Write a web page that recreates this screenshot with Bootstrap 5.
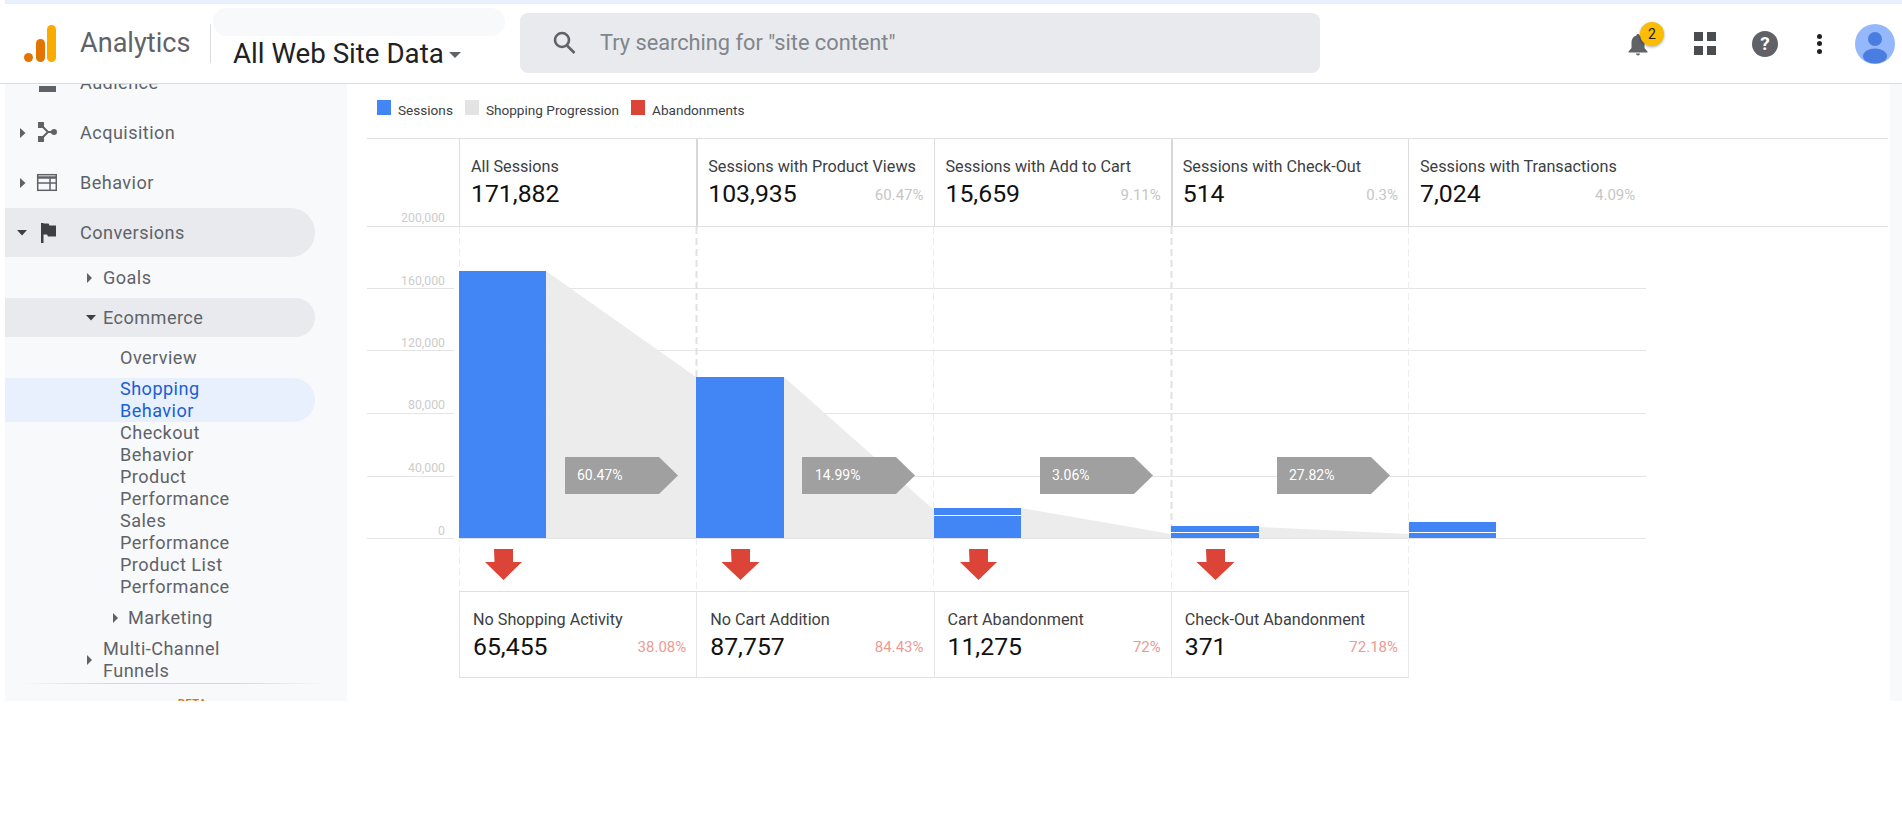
<!DOCTYPE html>
<html lang="en">
<head>
<meta charset="utf-8">
<title>Shopping Behavior - Analytics</title>
<link href="https://cdn.jsdelivr.net/npm/bootstrap@5.3.0/dist/css/bootstrap.min.css" rel="stylesheet">
<style>
html,body{height:100%;overflow:hidden;background:#fff;font-family:Roboto,"Liberation Sans",sans-serif;color:#212121}
.ga-strip{height:4px;margin-left:5px;background:#e8f0fe}
.ga-top{height:80px;border-bottom:1px solid #dcdcdc;background:#fff}
.ga-logo{margin-left:24px;flex:none}
.ga-brand{margin-left:24px;width:110px;font-size:27.1px;color:#5f6368;line-height:1;white-space:nowrap}
.ga-vline{margin-left:20px;width:1px;height:39px;background:#dadce0}
.ga-prop{margin-left:2px;width:292px;padding-top:4px}
.ga-pill{height:28px;border-radius:14px;background:#f8f9fa}
.ga-title{margin-top:3px;padding-left:20px;font-size:27.7px;line-height:30px;color:#202124;white-space:nowrap}
.ga-caret{display:inline-block;margin-left:5px;vertical-align:5px;border:6.5px solid transparent;border-top-color:#5f6368;border-bottom:0}
.ga-search{margin-left:15px;margin-bottom:1px;width:800px;height:60px;border-radius:8px;background:#e8eaed;padding-left:31px;color:#80868b;font-size:21.75px}
.ga-search span{margin-left:23px}
.ga-tools{padding-right:7px}
.ga-bell{width:20px;height:22px}
.ga-badge{position:absolute;top:-11px;left:12px;width:24px;height:24px;border-radius:50%;background:#fbbc04;box-shadow:0 1px 3px rgba(0,0,0,.35);font-size:14px;line-height:24px;text-align:center;color:#202124}
.ga-apps{margin-left:46px;display:grid;grid-template-columns:9px 9px;gap:5px 4px}
.ga-apps i{display:block;width:9px;height:9px;background:#4a4d50}
.ga-help{margin-left:36px;width:26px;height:26px;border-radius:50%;background:#5f6368;color:#fff;font-weight:700;font-size:19px;line-height:26px;text-align:center}
.ga-dots{margin-left:39px;width:6px;gap:2.5px}
.ga-dots i{display:block;width:5px;height:5px;border-radius:50%;background:#202124}
.ga-avatar{margin-left:32px;flex:none}
.ga-body{height:617px}
.ga-side{margin-left:5px;width:342px;flex:none;background:#f8f9fb;overflow:hidden;color:#5f6368;font-size:18.1px;letter-spacing:.45px;line-height:22px}
.ga-list{margin-top:-26px}
.ga-row{display:flex;align-items:center;height:50px;width:310px;position:relative}
.ga-row.ga-open{background:#e8eaed;border-radius:0 25px 25px 0;height:49px;margin-bottom:1px}
.ga-row svg.ga-ic{position:absolute;left:26px}
.ga-tick{position:absolute;left:0}
.ga-tick-s{left:55px}
.ga-tick-e{left:56px}
.ga-tick-m{left:81px}
.ga-lab{margin-left:75px}
.ga-sub{display:flex;align-items:center;width:310px;position:relative;height:40px}
.ga-sub .ga-lab{margin-left:98px}
.ga-sub.ga-open2{height:39px;margin-bottom:1px;background:#e8eaed;border-radius:0 20px 20px 0}
.ga-leaf{display:block;width:310px;padding-left:115px}
.ga-leaf.ga-h40{height:40px;line-height:40px}
.ga-leaf.ga-cur{background:#e8f0fe;color:#1a5fd6;border-radius:0 22px 22px 0}
.ga-sub.ga-mk .ga-lab{margin-left:123px}
.ga-sub.ga-mc{height:44px}
.ga-rule{height:1px;margin:1px 20px 0 15px;background:linear-gradient(90deg,#f8f9fb,#d5d6d8 30%,#d5d6d8 70%,#f8f9fb)}
.ga-beta{margin:14px 0 0 173px;font-size:11px;font-weight:700;color:#e8710a;letter-spacing:.5px;line-height:12px}
.ga-main{padding-left:20px;min-width:0}
.ga-panel{width:12px;flex:none;background:#f8f9fb}
.ga-legend{height:54px;padding-left:10px;font-size:13.6px;color:#3c4043;padding-top:16px}
.ga-legend b{display:inline-block;width:14px;height:15px;margin-right:7px;font-weight:400}
.ga-legend .ga-item{margin-right:12px;white-space:nowrap}
.ga-sw1{background:#4285f4}.ga-sw2{background:#e3e3e3}.ga-sw3{background:#db4437}
.ga-hd{border-top:1px solid #e0e0e0;border-bottom:1px solid #e0e0e0;width:1521px;height:89px;display:flex}
.ga-cols{display:grid;grid-template-columns:repeat(5,237.25px)}
.ga-ax{width:92px;flex:none;font-size:12.3px;color:#ccc;text-align:right;padding-right:14px;padding-top:71px;line-height:16px}
.ga-cell{border-left:1px solid #ddd;padding:18px 10px 0 11px;height:87px}
.ga-cell.ga-bold{border-left-width:2px;border-left-color:#d8d8d8;padding-left:10px}
.ga-name{font-size:16.2px;line-height:20px;color:#3c4043;white-space:nowrap}
.ga-val{font-size:24.8px;line-height:33px;color:#111}
.ga-pct{font-size:15px;color:#c6c6c6;padding-top:7px}
.ga-plot{display:block;width:1281px;height:364px;margin-left:-1px}
.ga-plot text{font-family:Roboto,"Liberation Sans",sans-serif}
.ga-low{margin-left:92px;width:950px;display:grid;grid-template-columns:repeat(4,237.25px);border-top:1px solid #e0e0e0;border-bottom:1px solid #e0e0e0;border-right:1px solid #e8e8e8;height:87px}
.ga-low .ga-cell{padding:18px 10px 0 13px;height:85px;border-left-color:#e4e4e4}
.ga-low .ga-pct{color:#ee9a93;padding-top:6px}
</style>
</head>
<body>
<div class="ga-strip"></div>
<header class="ga-top d-flex align-items-center">
  <svg class="ga-logo" width="32" height="38" viewBox="24 24 32 38"><circle cx="28.5" cy="56.5" r="4.5" fill="#e37400"/><rect x="36" y="38" width="9" height="23" rx="4.5" fill="#e37400"/><rect x="47" y="24" width="9" height="37" rx="4.5" fill="#f9ab00"/></svg>
  <div class="ga-brand">Analytics</div>
  <div class="ga-vline"></div>
  <div class="ga-prop align-self-start">
    <div class="ga-pill"></div>
    <div class="ga-title">All Web Site Data<span class="ga-caret"></span></div>
  </div>
  <div class="ga-search d-flex align-items-center">
    <svg width="26" height="26" viewBox="0 0 26 26" fill="none" stroke="#5f6368" stroke-width="2.6"><circle cx="11" cy="10" r="7"/><path d="M16 15.5l7.5 7.5"/></svg>
    <span>Try searching for "site content"</span>
  </div>
  <div class="ga-tools ms-auto d-flex align-items-center">
    <div class="ga-bell position-relative">
      <svg width="20" height="22" viewBox="0 0 20 22"><path d="M10 0c1 0 1.6.7 1.6 1.6C15 2.500 16.500 5.500 16.500 9v5l3 3.500v1H.5v-1l3-3.500V9c0-3.500 1.500-6.500 4.900-7.400C8.400.7 9 0 10 0z" fill="#5f6368"/><path d="M8 19.500h4a2 2 0 0 1-4 0z" fill="#5f6368"/></svg>
      <span class="ga-badge">2</span>
    </div>
    <div class="ga-apps"><i></i><i></i><i></i><i></i></div>
    <div class="ga-help">?</div>
    <div class="ga-dots d-flex flex-column"><i></i><i></i><i></i></div>
    <svg class="ga-avatar" width="40" height="40" viewBox="0 0 40 40"><defs><clipPath id="av"><circle cx="20" cy="20" r="20"/></clipPath></defs><circle cx="20" cy="20" r="20" fill="#94b8fb"/><g clip-path="url(#av)"><circle cx="20" cy="15" r="7" fill="#4a7de0"/><ellipse cx="20" cy="32" rx="12" ry="7.500" fill="#4a7de0"/></g></svg>
  </div>
</header>
<div class="ga-body d-flex">
  <aside class="ga-side">
    <div class="ga-list">
      <div class="ga-row">
        <svg class="ga-ic" width="26" height="50" viewBox="0 0 26 50"><rect x="8" y="28" width="17" height="6" fill="#5f6368"/></svg>
        <span class="ga-lab">Audience</span>
      </div>
      <div class="ga-row">
        <svg class="ga-tick" width="32" height="14" viewBox="0 0 32 14"><path d="M15 2l5.500 5-5.500 5z" fill="#5f6368"/></svg>
        <svg class="ga-ic" width="26" height="22" viewBox="31 122 26 22" fill="#5f6368"><path d="M41 125l7 7-7 7M48 132h6" fill="none" stroke="#5f6368" stroke-width="2"/><rect x="38" y="122" width="6" height="6"/><rect x="38" y="136" width="6" height="6"/><circle cx="54" cy="132" r="3"/></svg>
        <span class="ga-lab">Acquisition</span>
      </div>
      <div class="ga-row">
        <svg class="ga-tick" width="32" height="14" viewBox="0 0 32 14"><path d="M15 2l5.500 5-5.500 5z" fill="#5f6368"/></svg>
        <svg class="ga-ic" width="26" height="20" viewBox="31 173 26 20" fill="none" stroke="#5f6368" stroke-width="1.500"><rect x="37.700" y="174.700" width="18.600" height="15.600"/><path d="M37 177.500h20" stroke-width="2.500"/><path d="M37 183h20M50 178v12"/></svg>
        <span class="ga-lab">Behavior</span>
      </div>
      <div class="ga-row ga-open">
        <svg class="ga-tick" width="32" height="14" viewBox="0 0 32 14"><path d="M12 4h10l-5 5.500z" fill="#3c4043"/></svg>
        <svg class="ga-ic" width="26" height="22" viewBox="31 222 26 22" fill="#3c4043"><rect x="41" y="223" width="2.500" height="20"/><path d="M43 223.500h5.500l1 2h6.500v11h-8l-1-2H43z"/></svg>
        <span class="ga-lab">Conversions</span>
      </div>
      <div class="ga-sub">
        <svg class="ga-tick ga-tick-s" width="32" height="14" viewBox="0 0 32 14"><path d="M27 2l5 5-5 5z" fill="#5f6368"/></svg>
        <span class="ga-lab">Goals</span>
      </div>
      <div class="ga-sub ga-open2">
        <svg class="ga-tick ga-tick-e" width="36" height="14" viewBox="0 0 36 14"><path d="M25 4h10l-5 5.500z" fill="#3c4043"/></svg>
        <span class="ga-lab">Ecommerce</span>
      </div>
      <span class="ga-leaf ga-h40">Overview</span>
      <span class="ga-leaf ga-cur">Shopping<br>Behavior</span>
      <span class="ga-leaf">Checkout<br>Behavior</span>
      <span class="ga-leaf">Product<br>Performance</span>
      <span class="ga-leaf">Sales<br>Performance</span>
      <span class="ga-leaf">Product List<br>Performance</span>
      <div class="ga-sub ga-mk">
        <svg class="ga-tick ga-tick-m" width="32" height="14" viewBox="0 0 32 14"><path d="M27 2l5 5-5 5z" fill="#5f6368"/></svg>
        <span class="ga-lab">Marketing</span>
      </div>
      <div class="ga-sub ga-mc">
        <svg class="ga-tick ga-tick-s" width="32" height="14" viewBox="0 0 32 14"><path d="M27 2l5 5-5 5z" fill="#5f6368"/></svg>
        <span class="ga-lab">Multi-Channel<br>Funnels</span>
      </div>
      <div class="ga-rule"></div>
      <div class="ga-beta">BETA</div>
    </div>
  </aside>
  <main class="ga-main flex-grow-1">
    <div class="ga-legend d-flex">
      <span class="ga-item"><b class="ga-sw1"></b>Sessions</span>
      <span class="ga-item"><b class="ga-sw2"></b>Shopping Progression</span>
      <span class="ga-item"><b class="ga-sw3"></b>Abandonments</span>
    </div>
    <div class="ga-hd">
      <div class="ga-ax">200,000</div>
      <div class="ga-cols">
        <div class="ga-cell"><div class="ga-name">All Sessions</div><div class="d-flex justify-content-between"><span class="ga-val">171,882</span></div></div>
        <div class="ga-cell ga-bold"><div class="ga-name">Sessions with Product Views</div><div class="d-flex justify-content-between"><span class="ga-val">103,935</span><span class="ga-pct">60.47%</span></div></div>
        <div class="ga-cell"><div class="ga-name">Sessions with Add to Cart</div><div class="d-flex justify-content-between"><span class="ga-val">15,659</span><span class="ga-pct">9.11%</span></div></div>
        <div class="ga-cell ga-bold"><div class="ga-name">Sessions with Check-Out</div><div class="d-flex justify-content-between"><span class="ga-val">514</span><span class="ga-pct">0.3%</span></div></div>
        <div class="ga-cell"><div class="ga-name">Sessions with Transactions</div><div class="d-flex justify-content-between"><span class="ga-val">7,024</span><span class="ga-pct">4.09%</span></div></div>
      </div>
    </div>
    <svg class="ga-plot" viewBox="366 227 1281 364" font-size="12.300">
      <g stroke="#e4e4e4"><path d="M367 288.500H454M459 288.500H1646M367 350.500H454M459 350.500H1646M367 413.500H454M459 413.500H1646M367 476.500H454M459 476.500H1646M367 538.500H454M459 538.500H1646"/></g>
      <g fill="#ccc" text-anchor="end"><text x="445" y="284.500">160,000</text><text x="445" y="346.500">120,000</text><text x="445" y="408.500">80,000</text><text x="445" y="471.500">40,000</text><text x="445" y="534.500">0</text></g>
      <g stroke="#ededed" stroke-dasharray="7 4"><path d="M459.500 227V591M933.500 227V591M1408.500 227V591"/></g>
      <g stroke="#e2e2e2" stroke-width="2" stroke-dasharray="7 4"><path d="M696.500 227V538M1171.500 227V538"/></g>
      <g stroke="#ededed" stroke-dasharray="7 4"><path d="M696.500 538V591M1171.500 538V591"/></g>
      <g fill="#ebebeb" fill-opacity=".94"><path d="M546 271L696 377V538H546z"/><path d="M784 377L934 510V538H784z"/><path d="M1021 508L1171 534V538H1021z"/><path d="M1259 527L1409 534V538H1259z"/></g>
      <g fill="#4285f4"><rect x="459" y="271" width="87" height="267"/><rect x="696" y="377" width="88" height="161"/><rect x="934" y="508" width="87" height="30"/><rect x="1171" y="526" width="88" height="12"/><rect x="1409" y="522" width="87" height="16"/></g>
      <g fill="#fff"><rect x="934" y="515" width="87" height="1"/><rect x="1171" y="532" width="88" height="1"/><rect x="1409" y="532" width="87" height="1"/></g>
      <g fill="#a0a0a0"><path d="M565 457h94l19 18.500-19 18.500h-94z"/><path d="M802 457h94l19 18.500-19 18.500h-94z"/><path d="M1040 457h94l19 18.500-19 18.500h-94z"/><path d="M1277 457h94l19 18.500-19 18.500h-94z"/></g>
      <g fill="#fff" font-size="14"><text x="577" y="480">60.47%</text><text x="815" y="480">14.99%</text><text x="1052" y="480">3.06%</text><text x="1289" y="480">27.82%</text></g>
      <g fill="#db4437"><path d="M494 549h19v13h9l-18.500 18-18.500-18h9.500z"/><path d="M731 549h19v13h9.500l-19 18-19-18h10z"/><path d="M969 549h19v13h9l-18.500 18-18.500-18h9.500z"/><path d="M1206 549h19v13h9.500l-19 18-19-18h10z"/></g>
    </svg>
    <div class="ga-low">
      <div class="ga-cell"><div class="ga-name">No Shopping Activity</div><div class="d-flex justify-content-between"><span class="ga-val">65,455</span><span class="ga-pct">38.08%</span></div></div>
      <div class="ga-cell"><div class="ga-name">No Cart Addition</div><div class="d-flex justify-content-between"><span class="ga-val">87,757</span><span class="ga-pct">84.43%</span></div></div>
      <div class="ga-cell"><div class="ga-name">Cart Abandonment</div><div class="d-flex justify-content-between"><span class="ga-val">11,275</span><span class="ga-pct">72%</span></div></div>
      <div class="ga-cell"><div class="ga-name">Check-Out Abandonment</div><div class="d-flex justify-content-between"><span class="ga-val">371</span><span class="ga-pct">72.18%</span></div></div>
    </div>
  </main>
  <div class="ga-panel"></div>
</div>
<script src="https://cdn.jsdelivr.net/npm/bootstrap@5.3.0/dist/js/bootstrap.bundle.min.js"></script>
</body>
</html>
